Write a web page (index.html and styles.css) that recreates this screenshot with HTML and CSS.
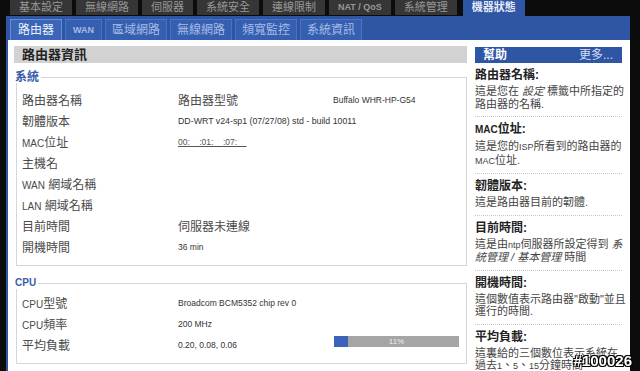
FILE: index.html
```html
<!DOCTYPE html>
<html lang="zh-Hant">
<head>
  <meta charset="UTF-8">
  <meta name="viewport" content="width=device-width, initial-scale=1.0">
  <title>機器狀態 - 路由器</title>
  <link rel="stylesheet" href="styles.css">
</head>
<body>
  <div class="topnav">
    <a class="tab">基本設定</a>
    <a class="tab">無線網路</a>
    <a class="tab">伺服器</a>
    <a class="tab">系統安全</a>
    <a class="tab">連線限制</a>
    <a class="tab en">NAT / QoS</a>
    <a class="tab">系統管理</a>
    <a class="tab active">機器狀態</a>
  </div>

  <div class="main">
    <div class="subnav">
      <a class="subtab active">路由器</a>
      <a class="subtab en">WAN</a>
      <a class="subtab">區域網路</a>
      <a class="subtab">無線網路</a>
      <a class="subtab">頻寬監控</a>
      <a class="subtab">系統資訊</a>
    </div>

    <div class="content">
      <div class="left">
        <h2 class="title">路由器資訊</h2>

        <fieldset>
          <legend>系統</legend>
          <div class="row">
            <span class="label">路由器名稱</span>
            <span class="value cjk">路由器型號</span>
            <span class="value">Buffalo WHR-HP-G54</span>
          </div>
          <div class="row">
            <span class="label">韌體版本</span>
            <span class="value wide">DD-WRT v24-sp1 (07/27/08) std - build 10011</span>
          </div>
          <div class="row">
            <span class="label"><span class="en">MAC</span>位址</span>
            <span class="value mac">00:&nbsp;&nbsp;&nbsp;&nbsp;:01:&nbsp;&nbsp;&nbsp;&nbsp;:07:&nbsp;&nbsp;&nbsp;&nbsp;</span>
          </div>
          <div class="row">
            <span class="label">主機名</span>
          </div>
          <div class="row">
            <span class="label"><span class="en">WAN</span> 網域名稱</span>
          </div>
          <div class="row">
            <span class="label"><span class="en">LAN</span> 網域名稱</span>
          </div>
          <div class="row">
            <span class="label">目前時間</span>
            <span class="value cjk">伺服器未連線</span>
          </div>
          <div class="row">
            <span class="label">開機時間</span>
            <span class="value">36 min</span>
          </div>
        </fieldset>

        <fieldset class="cpu">
          <legend>CPU</legend>
          <div class="row">
            <span class="label"><span class="en">CPU</span>型號</span>
            <span class="value">Broadcom BCM5352 chip rev 0</span>
          </div>
          <div class="row">
            <span class="label"><span class="en">CPU</span>頻率</span>
            <span class="value">200 MHz</span>
          </div>
          <div class="row">
            <span class="label">平均負載</span>
            <span class="value">0.20, 0.08, 0.06</span>
            <div class="bar">
              <div class="fill" style="width: 11%"></div>
              <span class="pct">11%</span>
            </div>
          </div>
        </fieldset>
      </div>

      <div class="help">
        <div class="help-head"><span class="h">幫助</span><span class="more">更多...</span></div>

        <div class="help-item">
          <h4>路由器名稱:</h4>
          <p>這是您在 <em>設定</em> 標籤中所指定的<br>路由器的名稱.</p>
        </div>
        <div class="help-item">
          <h4><span class="en">MAC</span>位址:</h4>
          <p>這是您的<span class="en">ISP</span>所看到的路由器的<br><span class="en">MAC</span>位址.</p>
        </div>
        <div class="help-item">
          <h4>韌體版本:</h4>
          <p>這是路由器目前的韌體.</p>
        </div>
        <div class="help-item">
          <h4>目前時間:</h4>
          <p>這是由<span class="en">ntp</span>伺服器所設定得到 <em>系</em><br><em>統管理 / 基本管理</em> 時間</p>
        </div>
        <div class="help-item">
          <h4>開機時間:</h4>
          <p>這個數值表示路由器"啟動"並且<br>運行的時間.</p>
        </div>
        <div class="help-item">
          <h4>平均負載:</h4>
          <p>這裏給的三個數位表示系統在<br>過去<span class="en">1</span>、<span class="en">5</span>、<span class="en">15</span>分鐘時間</p>
        </div>
      </div>
    </div>
  </div>

  <div class="stamp">#100026</div>
</body>
</html>
```

FILE: styles.css
```css
html, body {
  overflow: hidden;
}

body {
  margin: 0;
  background-color: #0c0c0c;
  font-family: "Liberation Sans", "Noto Sans CJK TC", sans-serif;
  color: #333;
}

a {
  text-decoration: none;
}

/* top level tabs */
.topnav {
  display: flex;
  gap: 4px;
  height: 16px;
  padding-left: 10px;
}

.tab {
  height: 15px;
  padding: 0 9px;
  background-color: #363636;
  color: #989898;
  font-size: 11px;
  line-height: 15px;
}

.tab.en {
  padding: 0 9px;
  font-size: 9px;
  font-weight: bold;
}

.tab.active {
  height: 16px;
  padding: 0 9px;
  margin-left: 2px;
  background-color: #2f55a5;
  color: #e6ebf7;
  font-weight: bold;
}

/* blue frame */
.main {
  margin-left: 6px;
  width: 624px;
}

.subnav {
  display: flex;
  gap: 3px;
  height: 24px;
  padding: 3px 0 0 4px;
  box-sizing: border-box;
  background-color: #2f55a5;
}

.subtab {
  height: 21px;
  padding: 0 6px;
  box-sizing: border-box;
  background-color: #3560b2;
  border: 1px solid #4b72c0;
  border-bottom: none;
  color: #a8bbe4;
  font-size: 12px;
  line-height: 20px;
}

.subtab.active {
  padding: 0 7px;
  background-color: #3a65b8;
  border-color: #6a8dd0;
  color: #eef2fb;
}

.subtab.en {
  padding: 0 7px;
  font-size: 9px;
  font-weight: bold;
}

.content {
  display: flex;
  gap: 8px;
  height: 331px;
  padding: 6px 8px 0 6px;
  background-color: #fff;
  border-left: 2px solid #2f55a5;
}

/* left column */
.left {
  width: 453px;
}

.title {
  margin: 0;
  height: 17px;
  padding-left: 8px;
  background-color: #d2d2d2;
  color: #222;
  font-size: 13px;
  line-height: 17px;
  font-weight: bold;
}

fieldset {
  margin: 8px 0 0 2px;
  padding: 6px 5px 8px;
  border: 1px solid #d6d6d6;
}

fieldset.cpu {
  margin-top: 11px;
  padding-top: 3px;
}

legend {
  margin-left: -7px;
  padding: 0 2px 0 0;
  color: #3a5ea8;
  font-size: 12px;
  line-height: 12px;
  font-weight: bold;
}

.cpu legend {
  font-size: 10px;
}

.row {
  display: grid;
  grid-template-columns: 156px 155px 1fr;
  align-items: center;
  height: 21px;
}

.label {
  color: #4a4a4a;
  font-size: 12px;
}

.en {
  font-size: 10px;
}

.value {
  color: #333;
  font-size: 8.5px;
}

.value.cjk {
  font-size: 12px;
  color: #4a4a4a;
}

.value.wide {
  grid-column: 2 / 4;
  font-size: 8.8px;
}

.value.mac {
  text-decoration: underline;
  color: #555;
}

.bar {
  display: grid;
  align-self: start;
  width: 125px;
  height: 11px;
  margin: 2px 0 0 1px;
  background-color: #a5a5a5;
}

.bar > * {
  grid-area: 1 / 1;
}

.fill {
  background-color: #3b63b9;
}

.pct {
  color: #eee;
  font-size: 8px;
  line-height: 11px;
  text-align: center;
}

/* help column */
.help {
  width: 147px;
}

.help-head {
  display: flex;
  justify-content: space-between;
  height: 16px;
  margin-top: 1px;
  padding: 0 9px 0 8px;
  background-color: #2f55a5;
  color: #fff;
  font-size: 12px;
  line-height: 16px;
}

.help-head .h {
  font-weight: bold;
}

.help-head .more {
  color: #d5def2;
}

.help-item h4 {
  margin: 4px 0 2px;
  color: #222;
  font-size: 12px;
  line-height: 16px;
}

.help-item:first-of-type h4 {
  margin-top: 5px;
}

.help-item p {
  margin: 0;
  padding-bottom: 6px;
  border-bottom: 1px dotted #c8c8c8;
  color: #444;
  font-size: 11px;
  line-height: 12.5px;
  white-space: nowrap;
}

.help-item p .en {
  font-size: 9px;
}

.help-item p em {
  font-style: italic;
}

.stamp {
  position: fixed;
  right: 8px;
  bottom: 2px;
  color: #fff;
  font-size: 15px;
  font-weight: bold;
  text-shadow: 1px 1px 0 #000, -1px -1px 0 #000, 1px -1px 0 #000, -1px 1px 0 #000;
}
```
